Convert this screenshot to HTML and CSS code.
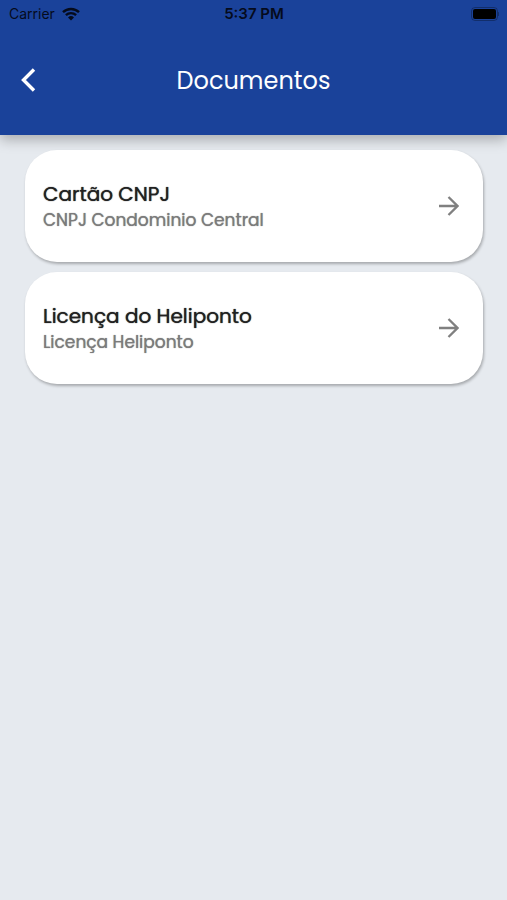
FILE: index.html
```html
<!DOCTYPE html>
<html lang="pt-BR">
<head>
    <meta charset="UTF-8">
    <meta name="viewport" content="width=device-width, initial-scale=1.0">
    <title>Documentos</title>
    <link rel="stylesheet" href="styles.css">
</head>
<body>
    <header class="header">
        <div class="status-bar">
            <div class="carrier">
                <span>Carrier</span>
                <svg class="wifi" viewBox="0 0 18 14" aria-hidden="true">
                    <path d="M1 5.2a11.6 11.6 0 0 1 16 0M3.9 8.2a7.4 7.4 0 0 1 10.2 0" fill="none" stroke="currentColor" stroke-width="2.4"/>
                    <path d="M9 13.4 6 10.4a4.3 4.3 0 0 1 6 0z" fill="currentColor"/>
                </svg>
            </div>
            <span class="time">5:37 PM</span>
            <svg class="battery" viewBox="0 0 28 14" aria-hidden="true">
                <rect x="0.5" y="0.5" width="26" height="13" rx="3.5" fill="none" stroke="currentColor" stroke-opacity="0.3"/>
                <rect x="2" y="2" width="23" height="10" rx="2" fill="currentColor"/>
                <path d="M27 5a2 2 0 0 1 0 4z" fill="currentColor" fill-opacity="0.3"/>
            </svg>
        </div>
        <div class="toolbar">
            <button class="back" type="button" aria-label="Voltar">
                <svg viewBox="0 0 16 26" aria-hidden="true">
                    <path d="M14 2.5 3.5 13 14 23.5" fill="none" stroke="currentColor" stroke-width="3.4" stroke-linejoin="miter"/>
                </svg>
            </button>
            <h1 class="title">Documentos</h1>
        </div>
    </header>
    <main class="documents">
        <a class="card" href="#">
            <div class="card-text">
                <h2>Cartão CNPJ</h2>
                <p>CNPJ Condominio Central</p>
            </div>
            <svg class="arrow" viewBox="0 0 20 20" aria-hidden="true">
                <path d="M0 10h18.5M9.5 1l9 9-9 9" fill="none" stroke="currentColor" stroke-width="2.3"/>
            </svg>
        </a>
        <a class="card" href="#">
            <div class="card-text">
                <h2>Licença do Heliponto</h2>
                <p>Licença Heliponto</p>
            </div>
            <svg class="arrow" viewBox="0 0 20 20" aria-hidden="true">
                <path d="M0 10h18.5M9.5 1l9 9-9 9" fill="none" stroke="currentColor" stroke-width="2.3"/>
            </svg>
        </a>
    </main>
</body>
</html>
```

FILE: styles.css
```css
* {
    box-sizing: border-box;
}
body {
    margin: 0;
    min-height: 100vh;
    background: #e6eaef;
    font-family: Poppins, Inter, sans-serif;
}
h1, h2, p {
    margin: 0;
}
.header {
    padding-bottom: 2px;
    background: #1a429a;
    box-shadow: 0 5px 12px rgba(0, 0, 0, 0.26);
}
.status-bar {
    display: grid;
    grid-template-columns: 1fr auto 1fr;
    align-items: center;
    height: 27px;
    padding: 0 8px 0 9px;
    font-family: Inter, sans-serif;
    font-size: 14px;
    color: #050b1c;
}
.carrier {
    display: flex;
    align-items: center;
    gap: 7px;
}
.wifi {
    width: 18px;
    height: 14px;
}
.time {
    font-size: 15px;
    font-weight: 600;
}
.battery {
    justify-self: end;
    width: 28px;
    height: 14px;
    color: #000;
}
.toolbar {
    display: grid;
    grid-template-columns: 40px 1fr 40px;
    align-items: center;
    height: 106px;
    padding: 0 8px;
    color: #fff;
}
.back {
    display: flex;
    align-items: center;
    justify-content: center;
    width: 40px;
    height: 40px;
    padding: 0;
    border: 0;
    background: none;
    color: inherit;
    cursor: pointer;
}
.back svg {
    width: 16px;
    height: 26px;
}
.title {
    font-size: 24px;
    font-weight: 400;
    text-align: center;
}
.documents {
    position: relative;
    display: flex;
    flex-direction: column;
    gap: 10px;
    padding: 15px 24px 15px 25px;
}
.card {
    display: flex;
    align-items: center;
    justify-content: space-between;
    min-height: 112px;
    padding: 18px 24px 18px 18px;
    border-radius: 32px;
    background: #fff;
    box-shadow: 1px 2px 3px rgba(0, 0, 0, 0.28);
    color: #212121;
    text-decoration: none;
}
.card h2 {
    font-size: 20px;
    font-weight: 400;
    line-height: 28px;
    text-shadow: 0 0 1px currentColor;
}
.card p {
    font-size: 17px;
    line-height: 24px;
    color: #7b7b7b;
    text-shadow: 0 0 1px currentColor;
}
.arrow {
    flex: none;
    width: 20px;
    height: 20px;
    color: #808080;
}
```
